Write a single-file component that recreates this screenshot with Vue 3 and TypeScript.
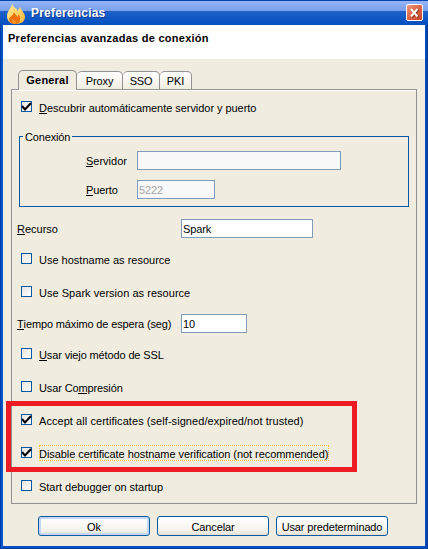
<script setup lang="ts">
interface Option {
  before: string
  key: string
  after: string
  checked: boolean
  name: string
}

const serverOptions: Option[] = [
  { before: '', key: '', after: 'Use hostname as resource', checked: false, name: 'hostname' },
  { before: '', key: '', after: 'Use Spark version as resource', checked: false, name: 'version' },
]

const securityOptions: Option[] = [
  { before: '', key: 'U', after: 'sar viejo método de SSL', checked: false, name: 'ssl' },
  { before: 'Usar Co', key: 'm', after: 'presión', checked: false, name: 'compression' },
  { before: '', key: '', after: 'Accept all certificates (self-signed/expired/not trusted)', checked: true, name: 'accept' },
  { before: '', key: '', after: 'Disable certificate hostname verification (not recommended)', checked: true, name: 'focused' },
  { before: '', key: '', after: 'Start debugger on startup', checked: false, name: 'debugger' },
]
</script>

<template>
  <div class="window">
    <header class="titlebar">
      <svg class="flame" width="20" height="22" viewBox="0 0 20 22">
        <defs>
          <linearGradient id="outer" x1="0" y1="0" x2="1" y2="1">
            <stop offset="0" stop-color="#ffe9a0" />
            <stop offset=".5" stop-color="#ffd568" />
            <stop offset="1" stop-color="#f6b23c" />
          </linearGradient>
        </defs>
        <path d="M6.500 0C6 4 11 5 12 8C12.500 6.500 13 5 14.500 3.500C14 7 19 9 19 14C19 18.500 15 21 10 21C4 21 1 18 1 13C1 8 5 6 6.500 0Z" fill="url(#outer)" />
        <path d="M7.500 9.500C9.500 10.500 10 12 11.500 14L12.500 11.500C14.500 13.500 14.500 16 13.500 18.500C13 20 11.500 21 10 21C6 21 3 19.500 3 16.500C3 13.500 7.500 13 7.500 9.500Z" fill="#ee710d" />
        <path d="M6.500 16C8 18 9.500 17.500 10.500 19L9 21C6 20.500 4.500 18.500 6.500 16Z" fill="#f69420" />
      </svg>
      <span class="title">Preferencias</span>
      <button class="close" aria-label="Cerrar">
        <svg width="15" height="15" viewBox="0 0 15 15">
          <path d="M5 5L11.500 12M11.500 5L5 12" stroke="#8e2d16" stroke-width="2" />
          <path d="M4 4L10.500 11.500M10.500 4L4 11.500" stroke="#fff" stroke-width="2" />
        </svg>
      </button>
    </header>

    <div class="heading"><span>Preferencias avanzadas de conexión</span></div>

    <main class="client">
      <nav class="tabs">
        <div class="tab active"><span>General</span></div>
        <div class="tab proxy"><span>Proxy</span></div>
        <div class="tab sso"><span>SSO</span></div>
        <div class="tab pki"><span>PKI</span></div>
      </nav>

      <section class="panel">
        <label class="option">
          <span class="box"><svg width="11" height="11" viewBox="0 0 11 11"><path d="M1 5L4 8.500L10 2" /></svg></span>
          <span class="label discover"><u>D</u>escubrir automáticamente servidor y puerto</span>
        </label>

        <div class="group">
          <span class="legend">Conexión</span>
          <div class="field"><span class="server"><u>S</u>ervidor</span><div class="input disabled wide"></div></div>
          <div class="field"><span class="port"><u>P</u>uerto</span><div class="input disabled small">5222</div></div>
        </div>

        <div class="setting"><span class="resource"><u>R</u>ecurso</span><div class="input medium">Spark</div></div>

        <div class="options first">
          <label v-for="o in serverOptions" :key="o.name" class="option">
            <span class="box"></span>
            <span class="label" :class="o.name">{{ o.after }}</span>
          </label>
        </div>

        <div class="setting"><span class="timeout"><u>T</u>iempo máximo de espera (seg)</span><div class="input short">10</div></div>

        <div class="options second">
          <label v-for="o in securityOptions" :key="o.name" class="option">
            <span class="box"><svg v-if="o.checked" width="11" height="11" viewBox="0 0 11 11"><path d="M1 5L4 8.500L10 2" /></svg></span>
            <span class="label" :class="o.name">{{ o.before }}<u v-if="o.key">{{ o.key }}</u>{{ o.after }}</span>
          </label>
        </div>
      </section>

      <footer class="buttons">
        <button class="action default"><span>Ok</span></button>
        <button class="action cancel"><span>Cancelar</span></button>
        <button class="action reset"><span>Usar predeterminado</span></button>
      </footer>
    </main>
    <div class="highlight"></div>
  </div>
</template>

<style>
body {
  margin: 0;
  overflow: hidden;
}
</style>

<style scoped>
* {
  box-sizing: border-box;
}
.window {
  position: relative;
  display: flex;
  flex-direction: column;
  width: 428px;
  height: 549px;
  background: linear-gradient(90deg, #003da8 0 1px, #0054c9 1px 3px, #0050c4 3px 426px, #003c9c 427px);
  font: 11px/16px "Liberation Sans", Arial, sans-serif;
  color: #000;
  letter-spacing: 0;
  white-space: nowrap;
  box-shadow: inset 0 -1px #00419f;
}
button {
  padding: 0;
  font: inherit;
  color: inherit;
  letter-spacing: inherit;
}
u {
  text-decoration: none;
  box-shadow: inset 0 -1px #000;
  display: inline-block;
  height: 14px;
  line-height: 16px;
  vertical-align: top;
}
.titlebar {
  display: flex;
  height: 25px;
  padding: 3px 5px 0 6px;
  background: linear-gradient(#0045a9 0 1px, #93b5f8 1px, #799feb 11px, #1f63c9 11px, #0d55c4 20px, #0050bd 25px);
}
.flame {
  flex: none;
}
.title {
  flex: 1;
  margin-left: 5px;
  font-size: 12px;
  line-height: 20px;
  font-weight: bold;
  letter-spacing: 0.2px;
  color: #fff;
  text-shadow: 1px 1px #123c91;
}
.close {
  width: 17px;
  height: 17px;
  margin-top: 1px;
  border: 1px solid #fff;
  border-radius: 2px;
  background: linear-gradient(135deg, #ed9983, #dc674b 45%, #c84723);
}
.close svg {
  display: block;
}
.heading {
  height: 34px;
  margin: 0 3px;
  padding: 5px 5px;
  background: #fff;
  font-weight: bold;
  letter-spacing: 0.26px;
}
.client {
  display: flex;
  flex-direction: column;
  height: 487px;
  margin: 0 3px;
  padding: 11px 8px 0;
  background: #f0ede0;
}
.tabs {
  display: flex;
  align-items: flex-end;
  height: 20px;
  margin-bottom: -1px;
  padding-left: 7px;
  position: relative;
}
.tab {
  height: 19px;
  border: 1px solid #919191;
  border-left: 0;
  border-radius: 5px 5px 0 0;
  background: linear-gradient(#fff, #f0ede0);
  line-height: 19px;
  text-align: center;
}
.tab.active {
  width: 59px;
  height: 20px;
  border-left: 1px solid #919191;
  border-bottom: 0;
  background: #f0ede0;
  font-weight: bold;
  letter-spacing: 0.2px;
  line-height: 18px;
}
.proxy { width: 46px; letter-spacing: -0.1px; }
.sso { width: 37px; letter-spacing: -0.3px; }
.pki { width: 32px; letter-spacing: -0.1px; }
.panel {
  height: 415px;
  width: 406px;
  border: 1px solid #919191;
  padding: 10px 7px 0;
  box-shadow: inset 0 1px #fff;
}
.option {
  display: flex;
  align-items: flex-start;
  height: 15px;
  padding-left: 2px;
}
.box {
  flex: none;
  width: 11px;
  height: 11px;
  margin: 1px 7px 0 0;
  border: 1px solid #0059a5;
  background: linear-gradient(135deg, #e6e5df, #fff);
}
.box svg {
  display: block;
  margin: -1px;
}
.box path {
  fill: none;
  stroke: #000;
  stroke-width: 2;
}
.label {
  height: 16px;
}
.discover { letter-spacing: -0.05px; }
.version { letter-spacing: 0.03px; }
.ssl,
.compression { letter-spacing: -0.13px; }
.accept { letter-spacing: 0.06px; }
.debugger { letter-spacing: -0.03px; }
.group {
  position: relative;
  display: flex;
  flex-direction: column;
  gap: 10px;
  width: 390px;
  height: 71px;
  margin-top: 21px;
  padding: 14px 0 0 66px;
  border: 1px solid #0059a5;
}
.legend {
  position: absolute;
  left: 3px;
  top: -8px;
  padding: 0 2px;
  line-height: 16px;
  letter-spacing: -0.15px;
  background: #f0ede0;
}
.field,
.setting {
  display: flex;
  align-items: flex-start;
}
.field > span {
  width: 51px;
  padding-top: 2px;
}
.port { letter-spacing: -0.1px; }
.setting {
  margin: 12px 0 0 -2px;
}
.setting > span {
  width: 164px;
  padding-top: 2px;
}
.timeout { letter-spacing: -0.14px; }
.input {
  height: 19px;
  border: 1px solid #7f9db9;
  background: #fff;
  padding-left: 1px;
  line-height: 18px;
  letter-spacing: -0.1px;
}
.input.disabled {
  background: #f8f8f8;
  color: #a7a7a7;
}
.wide { width: 204px; }
.small { width: 78px; }
.medium { width: 132px; }
.short { width: 66px; }
.options {
  display: flex;
  flex-direction: column;
  gap: 18px;
}
.first {
  margin: 14px 0 14px;
}
.first + .setting {
  margin-top: 0;
}
.second {
  margin-top: 14px;
}
.focused {
  width: 290px;
  margin-top: -1px;
  padding-top: 1px;
  letter-spacing: -0.06px;
  outline: 1px dotted #ffc800;
  outline-offset: -1px;
}
.buttons {
  display: flex;
  gap: 7px;
  margin: 12px 0 0 27px;
}
.action {
  width: 112px;
  height: 20px;
  border: 1px solid #0059a5;
  border-radius: 3px;
  background: linear-gradient(#fff, #f5f4ee 70%, #e6e1d4);
  line-height: 20px;
}
.cancel,
.reset { letter-spacing: -0.14px; }
.default {
  box-shadow: inset 0 0 0 2px #c4d7f7;
}
.highlight {
  position: absolute;
  left: 6px;
  top: 401px;
  width: 351px;
  height: 71px;
  border: 5px solid #ed1c24;
}
</style>
